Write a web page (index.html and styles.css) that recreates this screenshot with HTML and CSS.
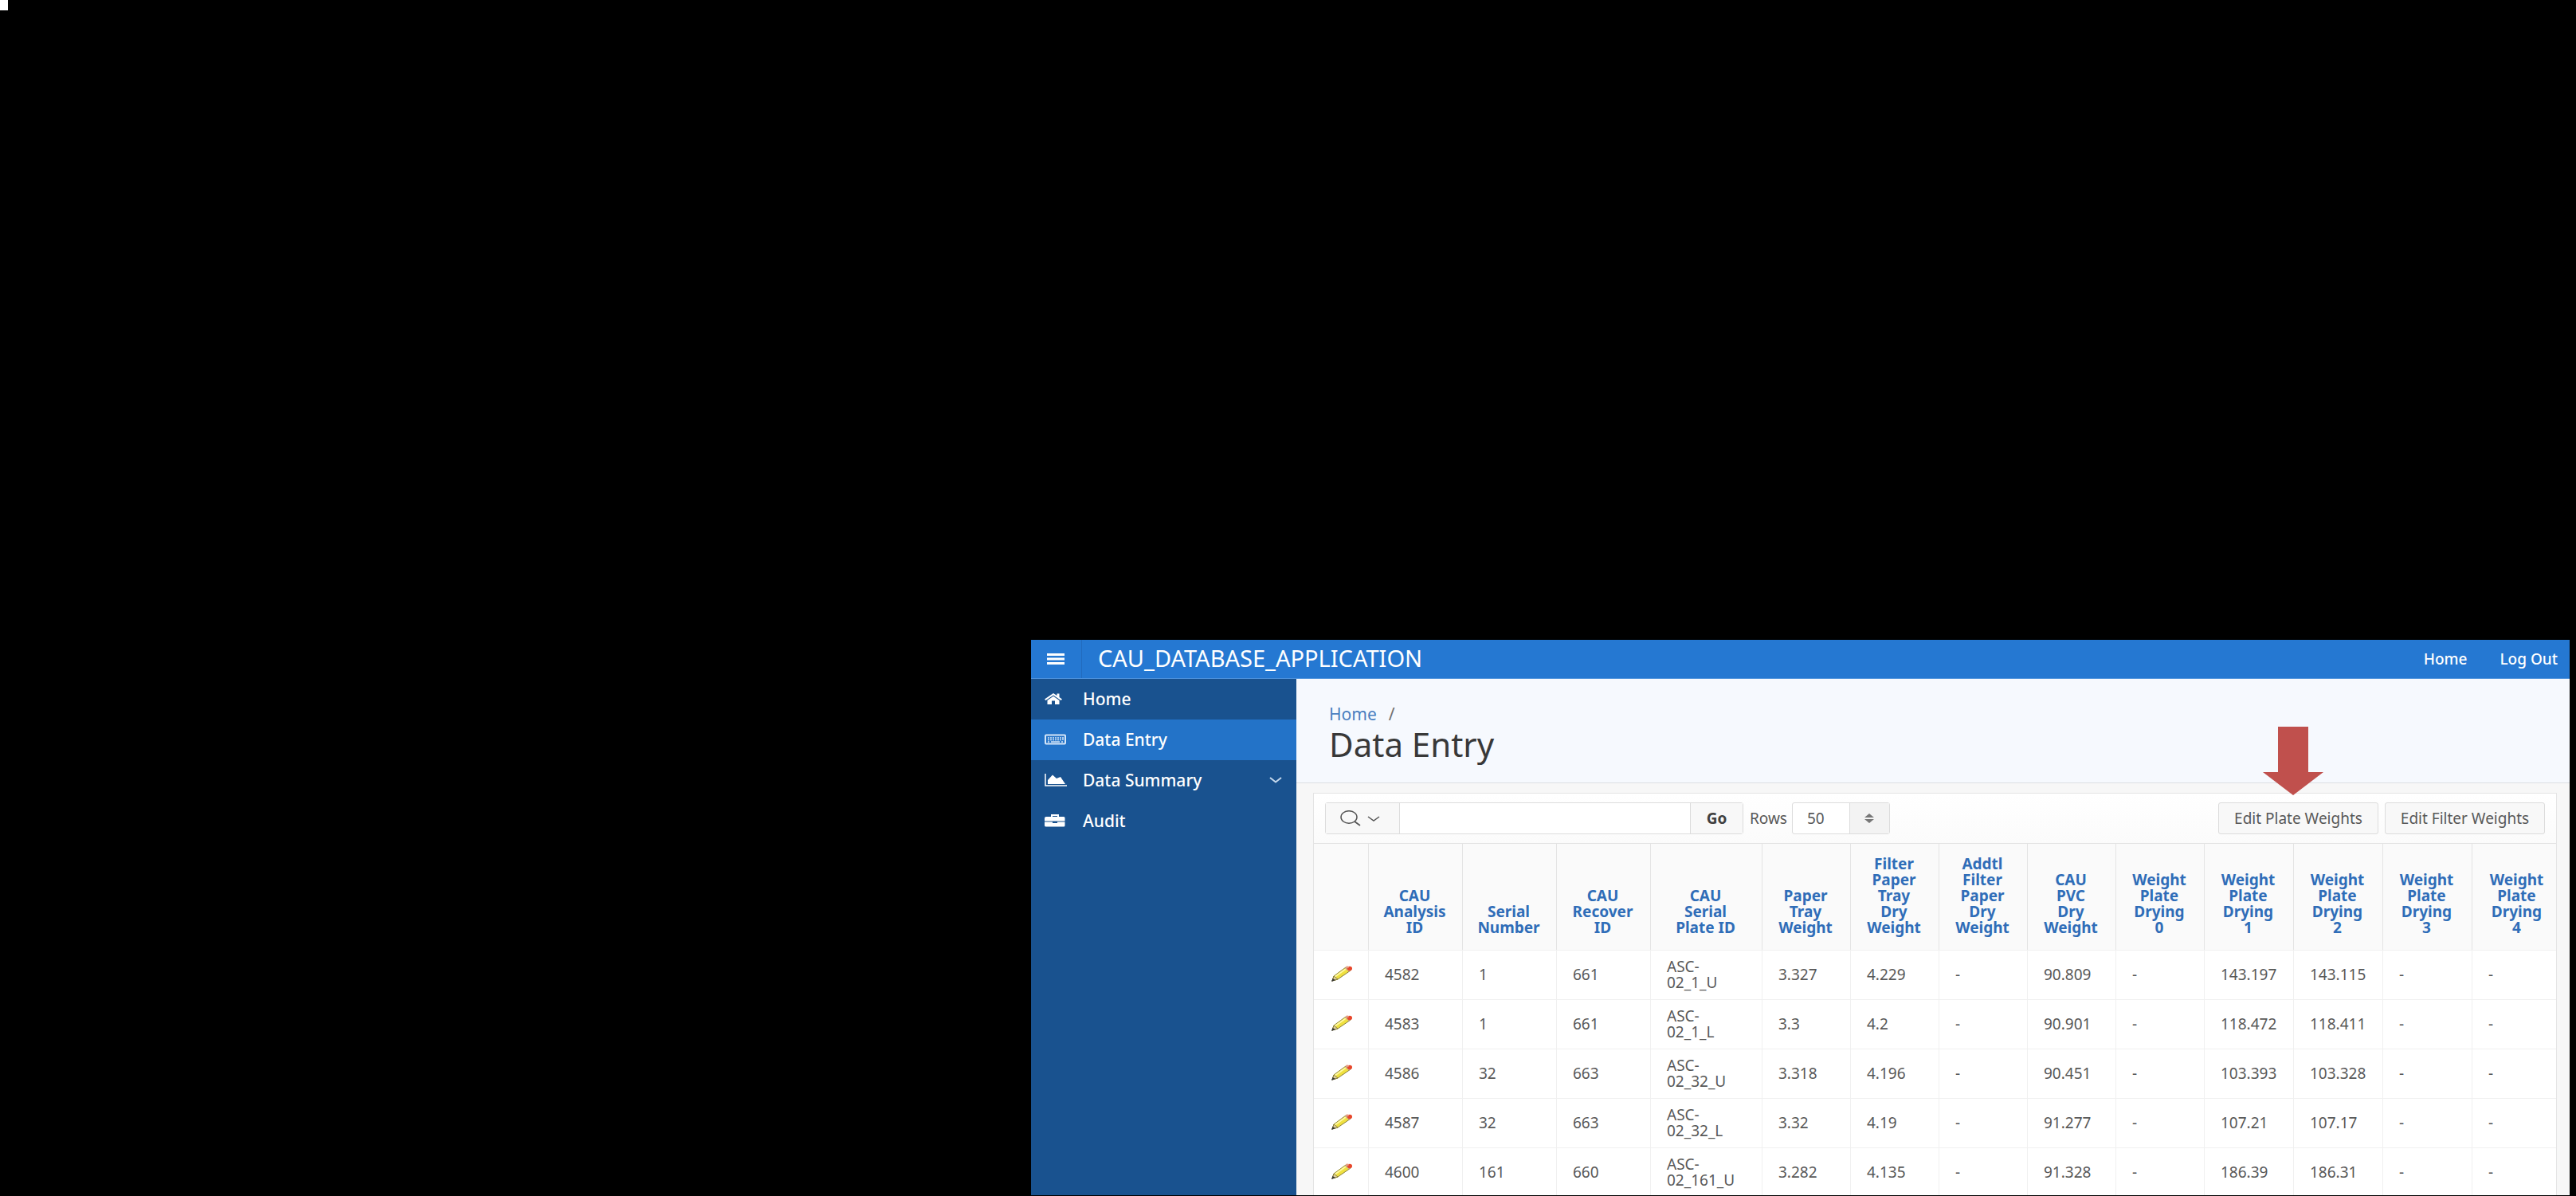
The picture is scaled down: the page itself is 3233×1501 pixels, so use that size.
FILE: index.html
```html
<!DOCTYPE html>
<html lang="en">
<head>
<meta charset="utf-8">
<title>CAU_DATABASE_APPLICATION</title>
<link rel="stylesheet" href="styles.css">
</head>
<body>
<div class="corner-mark"></div>
<svg class="defs" aria-hidden="true">
  <symbol id="pencil" viewBox="0 0 26 20">
    <path d="M1 19 L3 13 L18 2 L24 6 L8 17 Z" fill="#efe040" stroke="#8a8038" stroke-width="1"/>
    <path d="M4 14 L18 4" stroke="#fff9a0" stroke-width="2"/>
    <path d="M1 19 L3 13 L8 17 Z" fill="#e0d0a0" stroke="#8a8038" stroke-width="1"/>
    <path d="M0 20 L1.500 16 L5 18 Z" fill="#333"/>
    <path d="M17 3 L19 1.500 L24.500 5 L22 7.500 Z" fill="#c9a08c"/>
    <ellipse cx="23" cy="3.500" rx="3" ry="2.800" fill="#e8462a"/>
    <ellipse cx="20" cy="1.800" rx="2" ry="1.300" fill="#e89a80"/>
  </symbol>
</svg>
<div class="app">
  <header class="topbar">
    <button class="menu-btn" type="button" aria-label="Toggle navigation">
      <svg width="22" height="14" viewBox="0 0 22 14"><path d="M0 1.500H22M0 7H22M0 12.500H22" stroke="#fff" stroke-width="3"/></svg>
    </button>
    <span class="app-name">CAU_DATABASE_APPLICATION</span>
    <nav class="top-links"><a href="#">Home</a><a href="#">Log Out</a></nav>
  </header>
  <div class="body">
    <nav class="sidebar">
      <a class="item" href="#">
        <svg width="28" height="16" viewBox="0 0 28 16" fill="#fff"><path d="M11 1 L0 8.500 L1.500 10 L11 3.500 L20.500 10 L22 8.500 L18.500 6 V1.500 H15.500 V4 Z"/><path d="M11 4.800 L3.500 10 V15 H9 V10.500 H13 V15 H18.500 V10 Z"/></svg>
        <span>Home</span></a>
      <a class="item active" href="#">
        <svg width="28" height="16" viewBox="0 0 28 16"><rect x="1" y="2.500" width="25" height="11" rx="1" fill="none" stroke="#d5e6f8" stroke-width="2"/><path d="M4 6H22M4 8.500H22" stroke="#d5e6f8" stroke-width="1.500" stroke-dasharray="2 1"/><path d="M4 11H6M8 11H19M21 11H23M23 5V9" stroke="#d5e6f8" stroke-width="1.500"/></svg>
        <span>Data Entry</span></a>
      <a class="item" href="#">
        <svg width="28" height="16" viewBox="0 0 28 16"><path d="M1 0V15H28" fill="none" stroke="#fff" stroke-width="1.500"/><path d="M4 13V8L10 1.500L15 6L20 4L26 13Z" fill="#fff"/></svg>
        <span>Data Summary</span>
        <svg class="chev" width="16" height="8" viewBox="0 0 16 8"><path d="M1 1L8 6.500L15 1" fill="none" stroke="#c5d8ec" stroke-width="2"/></svg></a>
      <a class="item" href="#">
        <svg width="28" height="16" viewBox="0 0 28 16"><path d="M9 3.500V1H17V3.500" fill="none" stroke="#fff" stroke-width="2"/><path d="M2 3H24Q25.500 3 25.500 4.500V8.500H0V4.500Q0 3 2 3Z" fill="#fff"/><path d="M0 9.500H10V11H16V9.500H25.500V14Q25.500 15.500 24 15.500H2Q0 15.500 0 14Z" fill="#fff"/></svg>
        <span>Audit</span></a>
    </nav>
    <main class="main">
      <div class="page-head">
        <div class="crumbs"><a href="#">Home</a><span>/</span></div>
        <h1>Data Entry</h1>
        <svg class="pointer" width="76" height="86" viewBox="0 0 76 86"><path d="M19 0H57V57H76L38 86L0 57H19Z" fill="#c0504d"/></svg>
      </div>
      <section class="report">
        <div class="toolbar">
          <div class="search">
            <button class="search-menu" type="button" aria-label="Select columns to search">
              <svg width="26" height="20" viewBox="0 0 26 20"><ellipse cx="11" cy="8.500" rx="10" ry="7.800" fill="none" stroke="#555" stroke-width="1.500"/><path d="M18 14L25 19" stroke="#555" stroke-width="1.800"/></svg>
              <svg width="16" height="7" viewBox="0 0 16 7"><path d="M1 1L8 6L15 1" fill="none" stroke="#555" stroke-width="1.500"/></svg>
            </button>
            <input type="text" aria-label="Search report">
            <button class="go" type="button">Go</button>
          </div>
          <label for="rows">Rows</label>
          <div class="rows-select">
            <select id="rows"><option>50</option></select>
            <span class="rows-arrows"><svg width="12" height="12" viewBox="0 0 12 12"><path d="M0 5L6 0L12 5ZM0 7H12L6 12Z" fill="#777"/></svg></span>
          </div>
          <div class="actions"><button type="button">Edit Plate Weights</button><button type="button">Edit Filter Weights</button></div>
        </div>
        <table>
          <colgroup><col class="c-edit"><col class="c-id"><col class="c-id"><col class="c-id"><col class="c-plate"><col class="c-w"><col class="c-w"><col class="c-w"><col class="c-w"><col class="c-w"><col class="c-d"><col class="c-d"><col class="c-d"><col></colgroup>
          <thead>
            <tr>
              <th></th>
              <th><a href="#">CAU<br>Analysis<br>ID</a></th>
              <th><a href="#">Serial<br>Number</a></th>
              <th><a href="#">CAU<br>Recover<br>ID</a></th>
              <th><a href="#">CAU<br>Serial<br>Plate ID</a></th>
              <th><a href="#">Paper<br>Tray<br>Weight</a></th>
              <th><a href="#">Filter<br>Paper<br>Tray<br>Dry<br>Weight</a></th>
              <th><a href="#">Addtl<br>Filter<br>Paper<br>Dry<br>Weight</a></th>
              <th><a href="#">CAU<br>PVC<br>Dry<br>Weight</a></th>
              <th><a href="#">Weight<br>Plate<br>Drying<br>0</a></th>
              <th><a href="#">Weight<br>Plate<br>Drying<br>1</a></th>
              <th><a href="#">Weight<br>Plate<br>Drying<br>2</a></th>
              <th><a href="#">Weight<br>Plate<br>Drying<br>3</a></th>
              <th><a href="#">Weight<br>Plate<br>Drying<br>4</a></th>
            </tr>
          </thead>
          <tbody>
            <tr><td><a href="#" aria-label="Edit"><svg width="26" height="20"><use href="#pencil"/></svg></a></td><td>4582</td><td>1</td><td>661</td><td>ASC-<br>02_1_U</td><td>3.327</td><td>4.229</td><td>-</td><td>90.809</td><td>-</td><td>143.197</td><td>143.115</td><td>-</td><td>-</td></tr>
            <tr><td><a href="#" aria-label="Edit"><svg width="26" height="20"><use href="#pencil"/></svg></a></td><td>4583</td><td>1</td><td>661</td><td>ASC-<br>02_1_L</td><td>3.3</td><td>4.2</td><td>-</td><td>90.901</td><td>-</td><td>118.472</td><td>118.411</td><td>-</td><td>-</td></tr>
            <tr><td><a href="#" aria-label="Edit"><svg width="26" height="20"><use href="#pencil"/></svg></a></td><td>4586</td><td>32</td><td>663</td><td>ASC-<br>02_32_U</td><td>3.318</td><td>4.196</td><td>-</td><td>90.451</td><td>-</td><td>103.393</td><td>103.328</td><td>-</td><td>-</td></tr>
            <tr><td><a href="#" aria-label="Edit"><svg width="26" height="20"><use href="#pencil"/></svg></a></td><td>4587</td><td>32</td><td>663</td><td>ASC-<br>02_32_L</td><td>3.32</td><td>4.19</td><td>-</td><td>91.277</td><td>-</td><td>107.21</td><td>107.17</td><td>-</td><td>-</td></tr>
            <tr><td><a href="#" aria-label="Edit"><svg width="26" height="20"><use href="#pencil"/></svg></a></td><td>4600</td><td>161</td><td>660</td><td>ASC-<br>02_161_U</td><td>3.282</td><td>4.135</td><td>-</td><td>91.328</td><td>-</td><td>186.39</td><td>186.31</td><td>-</td><td>-</td></tr>
          </tbody>
        </table>
      </section>
    </main>
  </div>
</div>
</body>
</html>
```
FILE: styles.css
```css
* { box-sizing: border-box; }

body {
  margin: 0;
  height: 100vh;
  overflow: hidden;
  display: flex;
  flex-direction: column;
  background: #000;
  color: #585858;
  font: 19px/20px "Noto Sans", "Open Sans", sans-serif;
}

a { text-decoration: none; color: inherit; }
button, input, select { font: inherit; color: inherit; margin: 0; }
svg { display: block; flex: none; }
.defs { position: absolute; width: 0; height: 0; }

.corner-mark {
  position: absolute;
  left: 0;
  top: 0;
  width: 10px;
  height: 13px;
  background: #fff;
}

.app {
  flex: 1;
  min-height: 0;
  margin: 803px 8px 1px 1294px;
  display: flex;
  flex-direction: column;
  overflow: hidden;
}

/* Top bar */
.topbar {
  flex: none;
  height: 49px;
  display: flex;
  align-items: center;
  padding-right: 15px;
  background: #2578d2;
  border-bottom: 1px solid #4d92dc;
  color: #fff;
}
.menu-btn {
  width: 64px;
  height: 100%;
  padding: 0 20px;
  border: 0;
  border-right: 1px solid #216bbd;
  background: none;
}
.app-name { margin-left: 20px; padding-bottom: 2px; font-size: 29px; line-height: 32px; }
.top-links { margin-left: auto; display: flex; gap: 41px; font-weight: 500; }

/* Sidebar */
.body { flex: 1; min-height: 0; display: flex; }
.sidebar { flex: none; width: 333px; background: #19528f; color: #fff; }
.item {
  height: 51px;
  display: flex;
  align-items: center;
  gap: 20px;
  padding: 0 18px 2px 17px;
  font-size: 21px;
  font-weight: 500;
}
.item.active { background: #2373c8; }
.chev { margin-left: auto; }

/* Main column */
.main { flex: 1; min-width: 0; background: #f7f7f7; }
.page-head {
  position: relative;
  height: 131px;
  padding: 34px 40px 0 41px;
  background: #f6f9fe;
  border-bottom: 1px solid #dcdfe3;
}
.crumbs { display: flex; gap: 15px; font-size: 21px; line-height: 20px; color: #707070; }
.crumbs a { color: #4a7fc0; }
h1 { margin: 6px 0 0; font-size: 42px; line-height: 44px; font-weight: 400; color: #383838; }
.pointer { position: absolute; right: 309px; top: 60px; z-index: 1; }

.report {
  margin: 12px 16px 0 21px;
  border: 1px solid #e4e4e4;
  background: #fff;
}
.toolbar {
  height: 62px;
  display: flex;
  align-items: center;
  padding: 0 14px;
  background: linear-gradient(#fff, #fbfbfb);
}
.search {
  width: 525px;
  height: 40px;
  display: flex;
  border: 1px solid #dcdcdc;
  border-radius: 3px;
  background: #fff;
}
.search-menu {
  width: 93px;
  display: flex;
  align-items: center;
  gap: 8px;
  padding: 0 0 0 18px;
  border: 0;
  border-right: 1px solid #dcdcdc;
  background: #f8f8f8;
}
.search input { flex: 1; min-width: 0; border: 0; background: none; }
.go { width: 66px; padding: 0; border: 0; border-left: 1px solid #dcdcdc; background: #f8f8f8; font-weight: 700; color: #404040; }
.toolbar label { margin: 0 6px 0 8px; }
.rows-select {
  width: 123px;
  height: 40px;
  display: flex;
  position: relative;
  border: 1px solid #dcdcdc;
  border-radius: 3px;
  background: #fff;
}
.rows-select select { appearance: none; width: 100%; padding: 0 0 0 18px; border: 0; background: none; }
.rows-arrows {
  position: absolute;
  right: 0;
  top: 0;
  width: 50px;
  height: 100%;
  display: grid;
  place-items: center;
  border-left: 1px solid #dcdcdc;
  background: #f3f3f3;
  pointer-events: none;
}
.actions { margin-left: auto; display: flex; gap: 8px; }
.actions button {
  width: 201px;
  height: 40px;
  padding: 0;
  border: 1px solid #dcdcdc;
  border-radius: 3px;
  background: #f8f8f8;
}

/* Report table */
table { width: 100%; table-layout: fixed; border-collapse: separate; border-spacing: 0; }
.c-edit { width: 68px; }
.c-id { width: 118px; }
.c-plate { width: 140px; }
.c-w { width: 111px; }
.c-d { width: 112px; }
th {
  height: 134px;
  padding: 0 2px 18px 0;
  vertical-align: bottom;
  border-top: 1px solid #e2e2e2;
  border-left: 1px solid #e4e4e4;
  background: #fafafa;
  color: #2f6db8;
  font-weight: 700;
}
td {
  height: 62px;
  padding: 0 0 2px 20px;
  border-top: 1px solid #f0f0f0;
  border-left: 1px solid #f0f0f0;
  background: #fff;
}
th:first-child, td:first-child { border-left: 0; }
th:last-child { padding-left: 6px; padding-right: 0; }
td:first-child { padding: 0 0 4px 22px; }
```
